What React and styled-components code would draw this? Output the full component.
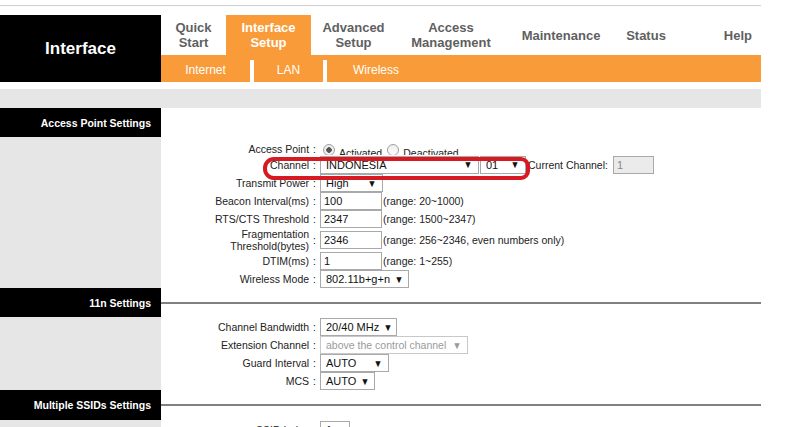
import React from 'react';
import styled, { createGlobalStyle } from 'styled-components';

const GlobalStyle = createGlobalStyle`
  body {
    margin: 0;
    background: #fff;
    font-family: "Liberation Sans", Arial, sans-serif;
    color: #222;
  }
`;

const ORANGE = '#f99b38';

const Page = styled.div`
  position: relative;
  width: 761px;
`;

const TopRule = styled.div`
  margin-top: 5px;
  height: 9px;
  border-top: 1px solid #cfcfcf;
`;

const Header = styled.div`
  display: flex;
  height: 67px;
`;

const Logo = styled.div`
  width: 161px;
  background: #000;
  color: #fff;
  font-size: 17px;
  font-weight: bold;
  display: flex;
  align-items: center;
  justify-content: center;
`;

const Nav = styled.div`
  flex: 1;
  display: flex;
  flex-direction: column;
`;

const Tabs = styled.div`
  display: flex;
  height: 40px;
`;

const Tab = styled.div`
  width: ${p => (p.$w ? `${p.$w}px` : 'auto')};
  flex: ${p => (p.$w ? 'none' : 1)};
  display: flex;
  align-items: center;
  justify-content: ${p => (p.$end ? 'flex-end' : 'center')};
  padding-right: ${p => (p.$end ? '9px' : '0')};
  text-align: center;
  font-size: 13px;
  font-weight: bold;
  line-height: 15px;
  background: ${p => (p.$active ? ORANGE : 'transparent')};
  color: ${p => (p.$active ? '#fff' : '#5f5f5f')};
`;

const SubBar = styled.div`
  display: flex;
  height: 27px;
  background: ${ORANGE};
`;

const SubTab = styled.div`
  width: ${p => p.$w}px;
  display: flex;
  align-items: center;
  justify-content: center;
  padding-top: 2px;
  font-size: 12px;
  color: #fff;
`;

const SubDivider = styled.div`
  width: 4px;
  margin-top: 5px;
  background: #fff;
`;

const GrayBar = styled.div`
  margin-top: 7px;
  height: 19px;
  background: #e6e6e6;
`;

const Section = styled.div`
  display: grid;
  grid-template-columns: 161px 1fr;
`;

const SectionTitle = styled.div`
  height: ${p => p.$h || 29}px;
  background: #000;
  color: #fff;
  font-size: 10.5px;
  font-weight: bold;
  display: flex;
  align-items: center;
  justify-content: flex-end;
  padding-right: 10px;
`;

const SectionRule = styled.div`
  display: flex;
  align-items: center;

  &::after {
    content: '';
    flex: 1;
    height: 2px;
    background: ${p => (p.$line ? '#808080' : 'transparent')};
  }
`;

const Side = styled.div`
  background: #e6e6e6;
`;

const Body = styled.div`
  padding-top: ${p => p.$pad || 0}px;
`;

const Row = styled.div`
  display: grid;
  grid-template-columns: 155px 1fr;
  column-gap: 4px;
  height: ${p => p.$h || 18}px;
  align-items: center;
  overflow: hidden;
  font-size: 10.5px;
`;

const Label = styled.div`
  display: flex;
  align-items: center;
  justify-content: flex-end;
  color: #222;
  line-height: 12px;
  text-align: right;
`;

const Colon = styled.span`
  margin-left: 4px;
`;

const Value = styled.div`
  display: flex;
  align-items: center;
  gap: ${p => p.$gap || 0}px;
`;

const Select = styled.div`
  box-sizing: border-box;
  width: ${p => p.$w}px;
  height: 18px;
  display: flex;
  align-items: center;
  justify-content: space-between;
  gap: 4px;
  padding: 0 5px;
  border: 1px solid ${p => (p.$disabled ? '#c8c8c8' : '#a9a9a9')};
  background: #fff;
  color: ${p => (p.$disabled ? '#9a9a9a' : '#111')};
  font-size: ${p => (p.$disabled ? 10.5 : 11)}px;
  white-space: nowrap;
`;

const Arrow = styled.span`
  font-size: 10px;
  transform: scaleX(0.9);
  color: ${p => (p.$disabled ? '#9a9a9a' : '#111')};
`;

const Field = styled.input`
  box-sizing: border-box;
  width: ${p => p.$w || 62}px;
  height: 18px;
  margin: 0;
  padding: 0 3px;
  border: 1px solid #a9a9a9;
  background: ${p => (p.$disabled ? '#ebebeb' : '#fff')};
  color: ${p => (p.$disabled ? '#888' : '#111')};
  font: 11px "Liberation Sans", Arial, sans-serif;
  outline: none;
`;

const Hint = styled.span`
  margin-left: ${p => p.$ml ?? 1}px;
  margin-right: ${p => p.$mr || 0}px;
  color: #222;
`;

const RadioGroup = styled.label`
  display: flex;
  align-items: center;
  margin-left: 3px;
  margin-right: 2px;
`;

const Radio = styled.span`
  box-sizing: border-box;
  width: 12px;
  height: 12px;
  margin-top: 2px;
  border-radius: 50%;
  border: 1px solid #a0a0a0;
  background: ${p => (p.$checked ? 'radial-gradient(circle, #555 0 2.5px, #eee 3px)' : 'linear-gradient(#eee, #fff)')};
`;

const RadioText = styled.span`
  margin-left: 4px;
  padding-top: 8px;
  color: #222;
`;

const Highlight = styled.div`
  position: absolute;
  left: 263px;
  top: 152px;
  width: 267px;
  height: 23px;
  box-sizing: border-box;
  border: 4px solid #d71a22;
  border-radius: 11px 9px 9px 11px;
  pointer-events: none;
`;

const Sel = ({ w, children, disabled }) => (
  <Select $w={w} $disabled={disabled}>
    <span>{children}</span>
    <Arrow $disabled={disabled}>▼</Arrow>
  </Select>
);

const FieldRow = ({ label, h, children, gap }) => (
  <Row $h={h}>
    <Label>
      <span>{label}</span>
      <Colon>:</Colon>
    </Label>
    <Value $gap={gap}>{children}</Value>
  </Row>
);

const tabs = [
  { label: ['Quick', 'Start'], w: 65 },
  { label: ['Interface', 'Setup'], w: 85, active: true },
  { label: ['Advanced', 'Setup'], w: 85 },
  { label: ['Access', 'Management'], w: 110 },
  { label: ['Maintenance'], w: 110 },
  { label: ['Status'], w: 60 },
];

export default function App() {
  return (
    <Page>
      <GlobalStyle />
      <TopRule />
      <Header>
        <Logo>Interface</Logo>
        <Nav>
          <Tabs>
            {tabs.map(t => (
              <Tab key={t.label[0]} $w={t.w} $active={t.active}>
                <div>
                  {t.label.map(l => (
                    <div key={l}>{l}</div>
                  ))}
                </div>
              </Tab>
            ))}
            <Tab $end>Help</Tab>
          </Tabs>
          <SubBar>
            <SubTab $w={89}>Internet</SubTab>
            <SubDivider />
            <SubTab $w={69}>LAN</SubTab>
            <SubDivider />
            <SubTab $w={98}>Wireless</SubTab>
          </SubBar>
        </Nav>
      </Header>
      <GrayBar />

      <Section>
        <SectionTitle>Access Point Settings</SectionTitle>
        <SectionRule />
        <Side />
        <Body $pad={2}>
          <FieldRow label="Access Point" h={16}>
            <RadioGroup>
              <Radio $checked />
              <RadioText>Activated</RadioText>
            </RadioGroup>
            <RadioGroup>
              <Radio />
              <RadioText>Deactivated</RadioText>
            </RadioGroup>
          </FieldRow>
          <FieldRow label="Channel" h={19} gap={1}>
            <Sel w={159}>INDONESIA</Sel>
            <Sel w={46}>01</Sel>
            <Hint $ml={1} $mr={4}>Current Channel:</Hint>
            <Field $w={41} $disabled readOnly value="1" />
          </FieldRow>
          <FieldRow label="Transmit Power">
            <Sel w={63}>High</Sel>
          </FieldRow>
          <FieldRow label="Beacon Interval(ms)">
            <Field readOnly value="100" />
            <Hint>(range: 20~1000)</Hint>
          </FieldRow>
          <FieldRow label="RTS/CTS Threshold">
            <Field readOnly value="2347" />
            <Hint>(range: 1500~2347)</Hint>
          </FieldRow>
          <FieldRow label={<>Fragmentation<br />Threshold(bytes)</>} h={24}>
            <Field readOnly value="2346" />
            <Hint>(range: 256~2346, even numbers only)</Hint>
          </FieldRow>
          <FieldRow label="DTIM(ms)">
            <Field readOnly value="1" />
            <Hint>(range: 1~255)</Hint>
          </FieldRow>
          <FieldRow label="Wireless Mode">
            <Sel w={89}>802.11b+g+n</Sel>
          </FieldRow>
        </Body>
      </Section>

      <Section>
        <SectionTitle>11n Settings</SectionTitle>
        <SectionRule $line />
        <Side />
        <Body $pad={1}>
          <FieldRow label="Channel Bandwidth">
            <Sel w={77}>20/40 MHz</Sel>
          </FieldRow>
          <FieldRow label="Extension Channel">
            <Sel w={148} disabled>above the control channel</Sel>
          </FieldRow>
          <FieldRow label="Guard Interval">
            <Sel w={69}>AUTO</Sel>
          </FieldRow>
          <FieldRow label="MCS">
            <Sel w={55}>AUTO</Sel>
          </FieldRow>
        </Body>
      </Section>

      <Section>
        <SectionTitle $h={30}>Multiple SSIDs Settings</SectionTitle>
        <SectionRule $line />
        <Side />
        <Body $pad={1}>
          <FieldRow label="SSID Index">
            <Sel w={30}>1</Sel>
          </FieldRow>
        </Body>
      </Section>

      <Highlight />
    </Page>
  );
}
